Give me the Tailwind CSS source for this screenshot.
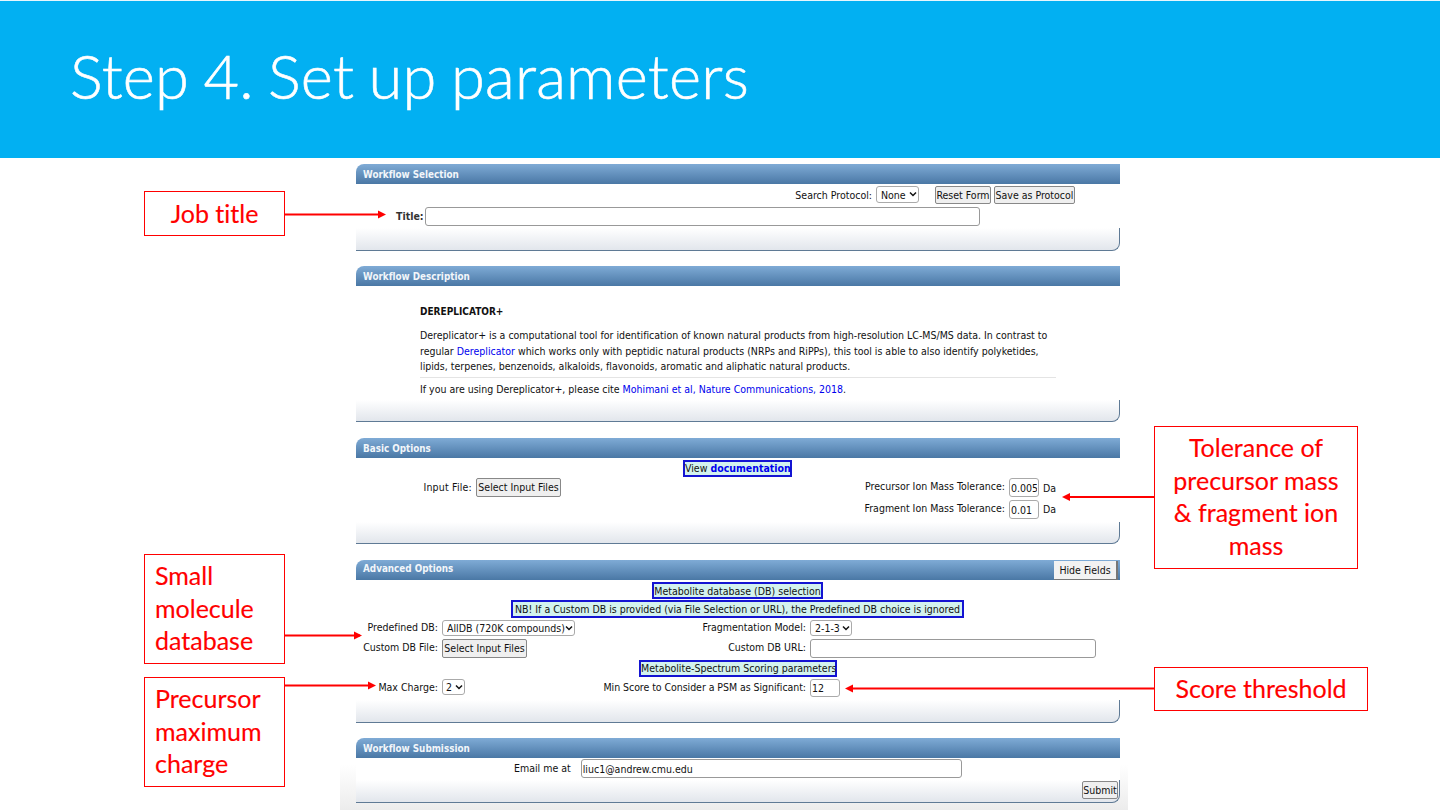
<!DOCTYPE html>
<html lang="en">
  <head>
    <meta charset="UTF-8" />
    <meta name="viewport" content="width=device-width, initial-scale=1.0" />
    <title>Step 4. Set up parameters</title>
    <script src="https://cdn.jsdelivr.net/npm/@tailwindcss/browser@4"></script>
  </head>
  <body>
    <main class="relative w-[1440px] h-[810px] overflow-hidden bg-white font-['Lato',sans-serif] [font-variant-ligatures:none]">
      <!-- title band -->
      <header class="h-[158px] bg-[#02b0f2] border-t border-[#e6f6fd] pl-[70px] pt-[36px]">
        <h1 class="text-[61.4px] leading-[76px] font-light text-white tracking-[0.2px] [word-spacing:-2.5px] [-webkit-text-stroke:0.6px_#fff]">Step 4. Set up parameters</h1>
      </header>

      <!-- form screenshot -->
      <section
        class="w-[788px] h-[652px] ml-[340px] pl-4 pr-2 pt-[6px] font-['DejaVu_Sans_Condensed','DejaVu_Sans',sans-serif] text-[10.5px] leading-[14px] text-[#111] bg-[linear-gradient(to_bottom,#fff_93%,#ececec_100%)]"
      >
        <!-- workflow selection -->
        <div class="h-[87px] flex flex-col">
          <div class="h-5 shrink-0 rounded-tl-lg bg-gradient-to-b from-[#7fabd6] to-[#4a78a5] pl-[7px] pt-[4px] text-[9.8px] font-bold text-[#f2f6fa]">Workflow Selection</div>
          <div class="h-[44px] shrink-0 bg-white">
            <div class="flex justify-end items-center h-[21px] pr-[45px]">
              <span>Search Protocol:</span>
              <span class="relative ml-[4px] w-[43px] h-[17px]">
                <select class="appearance-none w-full h-full pl-[4px] border border-[#aaa] rounded-[3px] bg-white text-[10.5px]"><option>None</option></select>
                <svg class="absolute right-[2px] top-[5px]" width="8" height="7" viewBox="0 0 8 7" fill="none"><path d="M1 1.500L4 4.500L7 1.500" stroke="#111" stroke-width="1.500" /></svg>
              </span>
              <button class="ml-4 w-[56px] h-[18px] border border-[#888] rounded-[2px] bg-[#efefef] text-[10.5px] whitespace-nowrap">Reset Form</button>
              <button class="ml-[3px] w-[81px] h-[18px] border border-[#888] rounded-[2px] bg-[#efefef] text-[10.5px] whitespace-nowrap">Save as Protocol</button>
            </div>
            <div class="flex items-center h-[19px] mt-[2px] pl-[40px]">
              <span class="font-semibold text-[#333] -mt-[1px]">Title:</span>
              <input class="ml-[1px] w-[555px] h-[19px] border border-[#999] rounded-[3px] bg-white" />
            </div>
          </div>
          <div class="flex-1 rounded-br-lg border-b border-r border-[#5f7a95] bg-gradient-to-b from-white to-[#e2e6ec]"></div>
        </div>

        <!-- workflow description -->
        <div class="h-[156px] mt-[15px] flex flex-col">
          <div class="h-5 shrink-0 rounded-tl-lg bg-gradient-to-b from-[#7fabd6] to-[#4a78a5] pl-[7px] pt-[4px] text-[9.8px] font-bold text-[#f2f6fa]">Workflow Description</div>
          <div class="h-[114px] shrink-0 bg-white pl-16 pr-16 pt-[19px]">
            <p class="font-bold text-[10px]">DEREPLICATOR+</p>
            <p class="mt-[9px] leading-[15.5px]">
              Dereplicator+ is a computational tool for identification of known natural products from high-resolution LC-MS/MS data. In contrast to regular
              <a class="text-[#0000ee]">Dereplicator</a>
              which works only with peptidic natural products (NRPs and RiPPs), this tool is able to also identify polyketides, lipids, terpenes, benzenoids, alkaloids, flavonoids, aromatic and aliphatic natural products.
            </p>
            <div class="mt-[2px] border-t border-[#e4e4e4]"></div>
            <p class="mt-[4px]">If you are using Dereplicator+, please cite <a class="text-[#0000ee]">Mohimani et al, Nature Communications, 2018</a>.</p>
          </div>
          <div class="flex-1 rounded-br-lg border-b border-r border-[#5f7a95] bg-gradient-to-b from-white to-[#e2e6ec]"></div>
        </div>

        <!-- basic options -->
        <div class="h-[106px] mt-[16px] flex flex-col">
          <div class="h-5 shrink-0 rounded-tl-lg bg-gradient-to-b from-[#7fabd6] to-[#4a78a5] pl-[7px] pt-[4px] text-[9.8px] font-bold text-[#f2f6fa]">Basic Options</div>
          <div class="h-[64px] shrink-0 bg-white pt-[2px]">
            <div class="flex justify-center">
              <div class="h-[17px] w-[109px] -ml-[1px] border-2 border-[#1414d2] bg-[#d3f2ee] text-center leading-[12px] whitespace-nowrap">View <a class="font-semibold text-[#0000ee]">documentation</a></div>
            </div>
            <div class="flex mt-[1px]">
              <div class="w-[116px] text-right pt-[2px] tracking-[0.2px]">Input File:</div>
              <button class="ml-[4px] w-[85px] h-[19px] pb-px border border-[#888] rounded-[2px] bg-[#efefef] text-[10.5px] whitespace-nowrap">Select Input Files</button>
              <div class="w-[478px] flex flex-col gap-[3px]">
                <div class="flex items-center justify-end h-[19px]">
                  <span class="-mt-[4px]">Precursor Ion Mass Tolerance:</span>
                  <input value="0.005" class="ml-[4px] w-[30px] h-[19px] px-[1px] border border-[#aaa] rounded-[3px] text-[10.5px]" />
                </div>
                <div class="flex items-center justify-end h-[19px]">
                  <span class="-mt-[4px]">Fragment Ion Mass Tolerance:</span>
                  <input value="0.01" class="ml-[4px] w-[30px] h-[19px] px-[1px] border border-[#aaa] rounded-[3px] text-[10.5px]" />
                </div>
              </div>
              <div class="flex flex-col gap-[3px] ml-[4px]">
                <span class="h-[19px] leading-[20px]">Da</span>
                <span class="h-[19px] leading-[18px]">Da</span>
              </div>
            </div>
          </div>
          <div class="flex-1 rounded-br-lg border-b border-r border-[#5f7a95] bg-gradient-to-b from-white to-[#e2e6ec]"></div>
        </div>

        <!-- advanced options -->
        <div class="h-[163px] mt-[16px] flex flex-col">
          <div class="h-5 shrink-0 flex justify-between rounded-tl-lg bg-gradient-to-b from-[#7fabd6] to-[#4a78a5] pl-[7px] pt-[1px] text-[9.8px] font-bold text-[#f2f6fa]">
            <span class="pt-[1px]">Advanced Options</span>
            <button class="mr-[2px] w-[64px] h-[19px] border-r-2 border-b border-[#777] bg-[#f2f2f2] font-normal text-[#111] text-[10.5px]">Hide Fields</button>
          </div>
          <div class="h-[120px] shrink-0 bg-white pt-[2px]">
            <div class="flex flex-col items-center gap-[1px]">
              <div class="h-[17px] w-[171px] border-2 border-[#1414d2] bg-[#d3f2ee] text-center leading-[14px] -ml-[1px] whitespace-nowrap">Metabolite database (DB) selection</div>
              <div class="h-[18px] w-[453px] border-2 border-[#1414d2] bg-[#d3f2ee] text-center leading-[14px] -ml-[1px] whitespace-nowrap">NB! If a Custom DB is provided (via File Selection or URL), the Predefined DB choice is ignored</div>
            </div>
            <div class="grid grid-cols-[82px_364px_1fr] gap-x-[4px] mt-[2px]">
              <div class="text-right whitespace-nowrap">Predefined DB:</div>
              <div class="flex justify-between">
                <span class="relative w-[133px] h-[16px]">
                  <select class="appearance-none w-full h-full pl-[4px] border border-[#aaa] rounded-[3px] bg-white text-[10.5px]"><option>AllDB (720K compounds)</option></select>
                  <svg class="absolute right-[2px] top-[5px]" width="8" height="7" viewBox="0 0 8 7" fill="none"><path d="M1 1.500L4 4.500L7 1.500" stroke="#111" stroke-width="1.500" /></svg>
                </span>
                <span>Fragmentation Model:</span>
              </div>
              <span class="relative w-[42px] h-[16px]">
                <select class="appearance-none w-full h-full pl-[4px] border border-[#aaa] rounded-[3px] bg-white text-[10.5px]"><option>2-1-3</option></select>
                <svg class="absolute right-[2px] top-[5px]" width="8" height="7" viewBox="0 0 8 7" fill="none"><path d="M1 1.500L4 4.500L7 1.500" stroke="#111" stroke-width="1.500" /></svg>
              </span>

              <div class="text-right mt-[3px] pt-px whitespace-nowrap">Custom DB File:</div>
              <div class="flex justify-between mt-[3px]">
                <button class="w-[85px] h-[19px] pb-px border border-[#888] rounded-[2px] bg-[#efefef] text-[10.5px] whitespace-nowrap">Select Input Files</button>
                <span class="pt-px">Custom DB URL:</span>
              </div>
              <input class="mt-[3px] w-[286px] h-[19px] border border-[#999] rounded-[3px] bg-white" />
            </div>
            <div class="flex justify-center mt-[2px]">
              <div class="h-[17px] w-[198px] border-2 border-[#1414d2] bg-[#d3f2ee] text-center leading-[13px] whitespace-nowrap">Metabolite-Spectrum Scoring parameters</div>
            </div>
            <div class="grid grid-cols-[82px_364px_1fr] gap-x-[4px] mt-[2px]">
              <div class="text-right pt-[1px] whitespace-nowrap">Max Charge:</div>
              <div class="flex justify-between">
                <span class="relative w-[23px] h-[16px]">
                  <select class="appearance-none w-full h-full pl-[3px] border border-[#aaa] rounded-[3px] bg-white text-[10.5px]"><option>2</option></select>
                  <svg class="absolute right-[2px] top-[5px]" width="8" height="7" viewBox="0 0 8 7" fill="none"><path d="M1 1.500L4 4.500L7 1.500" stroke="#111" stroke-width="1.500" /></svg>
                </span>
                <span class="pt-[1px] tracking-[-0.05px]">Min Score to Consider a PSM as Significant:</span>
              </div>
              <input value="12" class="w-[30px] h-[18px] px-[1px] border border-[#aaa] rounded-[3px] text-[10.5px]" />
            </div>
          </div>
          <div class="flex-1 rounded-br-lg border-b border-r border-[#5f7a95] bg-gradient-to-b from-white to-[#e2e6ec]"></div>
        </div>

        <!-- workflow submission -->
        <div class="h-[65px] mt-[15px] flex flex-col">
          <div class="h-5 shrink-0 rounded-tl-lg bg-gradient-to-b from-[#7fabd6] to-[#4a78a5] pl-[7px] pt-[4px] text-[9.8px] font-bold text-[#f2f6fa]">Workflow Submission</div>
          <div class="h-[22px] shrink-0 bg-white flex items-start pt-[1px]">
            <span class="ml-[158px] pt-[2px] whitespace-nowrap">Email me at</span>
            <input value="liuc1@andrew.cmu.edu" class="ml-[10px] w-[381px] h-[19px] px-[1px] border border-[#999] rounded-[3px] text-[10.5px]" />
          </div>
          <div class="flex-1 flex justify-end pt-px pr-[1px] rounded-br-lg border-b border-r border-[#5f7a95] bg-gradient-to-b from-white to-[#e2e6ec]">
            <button class="w-[36px] h-[18px] border border-[#888] rounded-[2px] bg-[#efefef] text-[10.5px]">Submit</button>
          </div>
        </div>
      </section>

      <!-- annotations -->
      <div class="absolute left-[144px] top-[191px] w-[141px] h-[45px] border border-[#f00] flex items-center justify-center text-[25px] text-[#f00] [-webkit-text-stroke:0.15px_#f00]">Job title</div>
      <div class="absolute left-[144px] top-[554px] w-[141px] h-[110px] border border-[#f00] pl-[10px] pt-[4px] text-[25px] leading-[32.5px] text-[#f00] [-webkit-text-stroke:0.15px_#f00]">Small molecule database</div>
      <div class="absolute left-[144px] top-[677px] w-[141px] h-[110px] border border-[#f00] pl-[10px] pt-[4px] text-[25px] leading-[32.5px] text-[#f00] [-webkit-text-stroke:0.15px_#f00]">Precursor maximum charge</div>
      <div class="absolute left-[1154px] top-[426px] w-[204px] h-[143px] border border-[#f00] px-[8px] pt-[4px] text-center text-[25px] leading-[32.5px] text-[#f00] [-webkit-text-stroke:0.15px_#f00]">Tolerance of precursor mass &amp; fragment ion mass</div>
      <div class="absolute left-[1154px] top-[667px] w-[214px] h-[44px] border border-[#f00] flex items-center justify-center text-[25px] text-[#f00] [-webkit-text-stroke:0.15px_#f00]">Score threshold</div>

      <svg class="absolute left-0 top-0 pointer-events-none" width="1440" height="810" viewBox="0 0 1440 810" fill="none">
        <g stroke="#f00" stroke-width="2">
          <path d="M285 214.500H380" />
          <path d="M1155 497H1068" />
          <path d="M285 635.500H360" />
          <path d="M285 685.500H370" />
          <path d="M1155 688.500H851" />
        </g>
        <g fill="#f00">
          <path d="M386 214.500L378 210.500V218.500Z" />
          <path d="M1062 497L1070 493V501Z" />
          <path d="M362 635.500L354 631.500V639.500Z" />
          <path d="M376 685.500L368 681.500V689.500Z" />
          <path d="M845 688.500L853 684.500V692.500Z" />
        </g>
      </svg>
    </main>
  </body>
</html>
